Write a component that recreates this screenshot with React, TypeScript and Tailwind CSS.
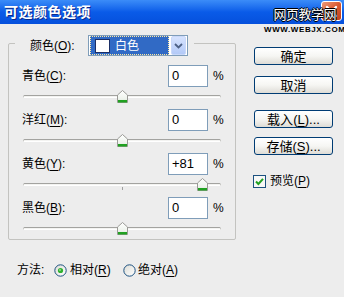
import React from "react";

interface ColorRow {
  label: string;
  key: string;
  value: number;
}

const rows: ColorRow[] = [
  { label: "青色", key: "C", value: 0 },
  { label: "洋红", key: "M", value: 0 },
  { label: "黄色", key: "Y", value: 81 },
  { label: "黑色", key: "B", value: 0 },
];

const font = "font-['Liberation_Sans','Noto_Sans_CJK_SC',sans-serif]";

const Thumb: React.FC = () => (
  <svg width="11" height="13" viewBox="0 0 11 13">
    <defs>
      <linearGradient id="thumbFill" x1="0" y1="0" x2="0" y2="1">
        <stop offset="0" stopColor="#ffffff" />
        <stop offset="0.7" stopColor="#eef3ec" />
        <stop offset="1" stopColor="#cfe8cf" />
      </linearGradient>
    </defs>
    <path d="M0.5 12.5 V5 L5.5 0.5 L10.5 5 V12.5 Z" fill="url(#thumbFill)" stroke="#9a9a96" />
    <rect x="1" y="10" width="9" height="2.5" fill="#21a121" />
  </svg>
);

const Slider: React.FC<{ value: number }> = ({ value }) => (
  <div className="relative h-[22px]">
    <div className="absolute left-[14px] top-[8px] w-[198px] h-[3px] rounded-full border border-t-[#a3a3a0] border-x-[#c4c4c0] border-b-white bg-[#f3f3f1]" />
    <div className="absolute left-[113px] top-[12px] w-px h-[3px] bg-[#a0a0a0]" />
    <div className="absolute top-[3px]" style={{ left: 108 + Math.round(value * 0.99) }}>
      <Thumb />
    </div>
  </div>
);

const Mn: React.FC<{ k: string }> = ({ k }) => (
  <>
    (<span className="underline underline-offset-2">{k}</span>)
  </>
);

const Radio: React.FC<{ checked?: boolean }> = ({ checked }) => (
  <svg width="13" height="13" viewBox="0 0 13 13">
    <defs>
      <linearGradient id={checked ? "rOn" : "rOff"} x1="0" y1="0" x2="1" y2="1">
        <stop offset="0" stopColor="#dcdcd6" />
        <stop offset="1" stopColor="#ffffff" />
      </linearGradient>
    </defs>
    <circle cx="6.5" cy="6.5" r="5.7" fill={`url(#${checked ? "rOn" : "rOff"})`} stroke="#1c5180" strokeWidth="1" />
    {checked && <circle cx="6.5" cy="6.5" r="2.6" fill="#2fb12f" />}
    {checked && <circle cx="6" cy="6" r="1" fill="#8fdc8f" />}
  </svg>
);

const Button: React.FC<{ children: React.ReactNode; className?: string }> = ({ children, className }) => (
  <div
    className={`w-[79px] h-[18px] flex items-center justify-center rounded-[3px] border border-[#003c74] bg-linear-to-b from-white via-[#f6f6f3] to-[#dedcd6] text-[13px] leading-none text-black ${className ?? ""}`}
  >
    {children}
  </div>
);

const App: React.FC = () => {
  return (
    <div className={`relative w-[344px] h-[297px] overflow-hidden bg-[#ededed] text-black ${font}`}>
      {/* title bar */}
      <div className="h-[24px] flex items-center justify-between bg-linear-to-b from-[#3b8cf8] via-[#0a5be8] to-[#0650dc]">
        <span className="ml-[4px] text-[14px] font-bold text-white tracking-[0.5px] [text-shadow:1px_1px_0_#0b2a8c]">
          可选颜色选项
        </span>
        <div className="mr-[2px] mt-[-2px] w-[21px] h-[20px] rounded-[3px] border border-white bg-linear-to-br from-[#ec9a78] via-[#d95a32] to-[#c2401c] flex items-center justify-center">
          <svg width="13" height="13" viewBox="0 0 13 13">
            <path d="M2 2 L11 11 M11 2 L2 11" stroke="white" strokeWidth="2.4" strokeLinecap="round" />
          </svg>
        </div>
      </div>

      {/* watermark */}
      <div className="absolute left-[264px] top-[8px] flex flex-col items-center leading-none">
        <span className="text-[13px] text-white tracking-[-0.5px] [text-shadow:-1px_0_#000,1px_0_#000,0_-1px_#000,0_1px_#000]">
          网页教学网
        </span>
        <span className="mt-[5px] text-[8px] font-bold text-black tracking-[0.6px]">
          WWW.WEBJX.COM
        </span>
      </div>

      <div className="flex">
        {/* left column */}
        <div className="ml-[8px]">
          <div className="mt-[19px] w-[228px] h-[197px] border border-[#c3c3c0] rounded-[2px]">
            <div className="-mt-[9px] ml-[6px] w-fit h-[21px] flex items-center bg-[#ededed] pl-[15px] pr-[6px]">
              <span className="w-[58px] text-[12px]">
                颜色<Mn k="O" />:
              </span>
              <div className="w-[100px] h-[21px] flex items-center border border-[#7f9db9] bg-white">
                <div className="ml-px w-[79px] h-[19px] flex items-center bg-[#316ac5] outline-1 outline-dotted outline-[#ffe9a0] -outline-offset-1">
                  <div className="ml-[5px] w-[15px] h-[14px] bg-white border border-[#1b2f66]" />
                  <span className="ml-[5px] text-[12px] text-white">白色</span>
                </div>
                <div className="ml-[2px] w-[15px] h-[19px] flex items-center justify-center rounded-[2px] bg-linear-to-b from-[#d6e3fe] to-[#b3c9f7] border border-[#c9d8f9]">
                  <svg width="9" height="6" viewBox="0 0 9 6">
                    <path d="M1 1 L4.5 4.5 L8 1" fill="none" stroke="#4d6185" strokeWidth="1.8" />
                  </svg>
                </div>
              </div>
            </div>

            <div className="mt-[9px]">
              {rows.map((row) => (
                <div key={row.key}>
                  <div className="flex items-center h-[22px] pl-[13px]">
                    <span className="w-[146px] text-[12px]">
                      {row.label}
                      <Mn k={row.key} />:
                    </span>
                    <div className="w-[40px] h-[22px] flex items-center border border-[#7f9db9] bg-white pl-[3px] text-[13px]">
                      {row.value > 0 ? `+${row.value}` : row.value}
                    </div>
                    <span className="ml-[5px] text-[12px]">%</span>
                  </div>
                  <Slider value={row.value} />
                </div>
              ))}
            </div>
          </div>

          <div className="mt-[22px] h-[16px] flex items-center pl-[9px] text-[12px]">
            <span className="w-[37px]">方法:</span>
            <div className="w-[69px] flex items-center">
              <Radio checked />
              <span className="ml-[3px]">
                相对<Mn k="R" />
              </span>
            </div>
            <div className="flex items-center">
              <Radio />
              <span className="ml-[2px]">
                绝对<Mn k="A" />
              </span>
            </div>
          </div>
        </div>

        {/* right column */}
        <div className="ml-[18px] mt-[23px] flex flex-col">
          <Button>确定</Button>
          <Button className="mt-[11px]">取消</Button>
          <Button className="mt-[16px]">
            载入<Mn k="L" />...
          </Button>
          <Button className="mt-[9px]">
            存储<Mn k="S" />...
          </Button>
          <div className="mt-[17px] -ml-px flex items-center text-[12px]">
            <svg width="13" height="13" viewBox="0 0 13 13">
              <rect x="0.5" y="0.5" width="12" height="12" fill="#f8f8f6" stroke="#1c5180" />
              <path d="M3 6.5 L5.4 9 L10 3.8" fill="none" stroke="#21a121" strokeWidth="2" />
            </svg>
            <span className="ml-[4px]">
              预览<Mn k="P" />
            </span>
          </div>
        </div>
      </div>
    </div>
  );
};

export default App;
